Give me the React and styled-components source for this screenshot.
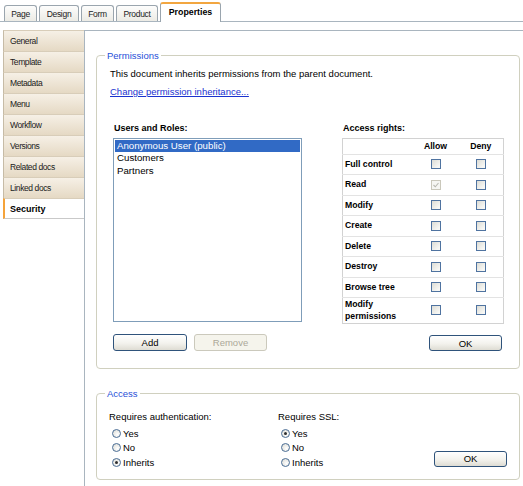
import React from 'react';
import styled, { createGlobalStyle, css } from 'styled-components';

const GlobalStyle = createGlobalStyle`
  html, body { margin: 0; padding: 0; background: #fff; }
  body { font-family: "Liberation Sans", Arial, sans-serif; color: #000; }
  * { box-sizing: border-box; }
`;

const Page = styled.div`
  width: 523px;
  height: 486px;
  overflow: hidden;
  background: #fff;
`;

const TabStrip = styled.div`
  display: flex;
  align-items: flex-end;
  gap: 2px;
  height: 22px;
  padding-left: 4px;
  border-bottom: 1px solid #a9b5bf;
`;

const Tab = styled.div`
  width: ${(p) => p.$w}px;
  height: 16px;
  border: 1px solid #9aa5ae;
  border-bottom: none;
  border-radius: 3px 3px 0 0;
  background: linear-gradient(#fdfdfc, #ecebe5);
  font-size: 8.5px;
  letter-spacing: -0.3px;
  color: #222;
  display: flex;
  align-items: center;
  justify-content: center;
  ${(p) =>
    p.$active &&
    css`
      height: 20px;
      margin-bottom: -1px;
      background: #fff;
      border-top: 2px solid #f2a640;
      font-weight: bold;
      font-size: 8.8px;
      letter-spacing: 0;
      color: #000;
      padding-bottom: 2px;
    `}
`;

const Body = styled.div`
  display: flex;
  margin-top: 8px;
  height: 456px;
`;

const Nav = styled.div`
  width: 82px;
  margin-left: 3px;
  display: flex;
  flex-direction: column;
`;

const NavItem = styled.div`
  height: 21px;
  display: flex;
  align-items: center;
  padding-left: 6px;
  border-left: 1px solid #c6bba6;
  border-top: 1px solid #d8cdb9;
  background: linear-gradient(#f6f0e6, #e5d9c4);
  font-size: 8.5px;
  letter-spacing: -0.4px;
  color: #1a1a1a;
  ${(p) =>
    p.$active &&
    css`
      background: #fff;
      border-left: 2px solid #f5a33a;
      border-bottom: 1px solid #c9c9c9;
      font-weight: bold;
      font-size: 9px;
      letter-spacing: 0;
      color: #000;
      padding-left: 5px;
    `}
`;

const Content = styled.div`
  flex: 1;
  border-top: 1px solid #a9b5bf;
  border-left: 1px solid #a9b5bf;
  padding: 0 3px 0 11px;
  display: flex;
  flex-direction: column;
`;

const Fieldset = styled.fieldset`
  margin: ${(p) => p.$mt}px 0 0 0;
  padding: 0;
  min-width: 0;
  border: 1px solid #d0d0bf;
  border-radius: 4px;
`;

const Legend = styled.legend`
  margin-left: 8px;
  padding: 0 2px;
  color: #1f4fd8;
  font-size: 9.5px;
  line-height: 11px;
`;

const FieldBody = styled.div`
  padding: ${(p) => p.$pad};
`;

const Text = styled.div`
  font-size: 9.5px;
  line-height: 12px;
`;

const Link = styled.a`
  display: block;
  margin-top: 6px;
  font-size: 9.5px;
  line-height: 12px;
  color: #1b33cf;
  text-decoration: underline;
  cursor: pointer;
`;

const Columns = styled.div`
  display: grid;
  grid-template-columns: 189px 161px;
  column-gap: 40px;
  margin: 24px 0 0 3px;
`;

const Column = styled.div`
  display: flex;
  flex-direction: column;
`;

const BoldLabel = styled.div`
  font-size: 9px;
  font-weight: bold;
  line-height: 12px;
  padding-left: 1px;
`;

const ListBox = styled.div`
  margin-top: 3.5px;
  height: 184px;
  border: 1px solid #7f9db9;
  padding: 1px;
  background: #fff;
`;

const ListItem = styled.div`
  height: 12.5px;
  line-height: 12.5px;
  padding-left: 2px;
  font-size: 9.7px;
  white-space: nowrap;
  ${(p) =>
    p.$selected &&
    css`
      background: #316ac5;
      color: #fff;
    `}
`;

const ButtonRow = styled.div`
  display: flex;
  gap: 7px;
  margin-top: ${(p) => p.$mt}px;
  justify-content: ${(p) => p.$justify || 'flex-start'};
  padding-right: ${(p) => p.$pr || 0}px;
`;

const Button = styled.button`
  width: ${(p) => p.$w}px;
  height: ${(p) => p.$h}px;
  padding: 0;
  border: 1px solid #2f537b;
  border-radius: 3px;
  background: linear-gradient(#ffffff, #f3f2ed 55%, #dedcd3);
  font-family: inherit;
  font-size: 9.5px;
  color: #000;
  &:disabled {
    border-color: #cbc9bc;
    background: #f5f4ec;
    color: #aca899;
  }
`;

const RightsTable = styled.table`
  margin-top: 3.5px;
  width: 161px;
  border-collapse: collapse;
  table-layout: fixed;
  border: 1px solid #d2d2d2;
  background: #fff;
`;

const Th = styled.th`
  height: 16px;
  padding: 0;
  font-size: 8.7px;
  font-weight: bold;
  text-align: center;
`;

const Td = styled.td`
  height: ${(p) => p.$h || 20.5}px;
  border-top: 1px solid #e3e3e3;
  padding: 0 0 0 ${(p) => (p.$center ? 0 : 2)}px;
  font-size: 8.7px;
  font-weight: bold;
  line-height: 11.5px;
  text-align: ${(p) => (p.$center ? 'center' : 'left')};
  vertical-align: middle;
`;

const Check = styled.span`
  display: inline-block;
  width: 10px;
  height: 10px;
  vertical-align: middle;
  border: 1px solid #4f73a0;
  background: linear-gradient(135deg, #dcdcd5, #f7f7f4 80%);
  position: relative;
  ${(p) =>
    p.$disabled &&
    css`
      border-color: #cac8bb;
      background: #f6f6f2;
    `}
`;

const CheckMark = styled.svg`
  position: absolute;
  left: 1px;
  top: 1px;
`;

const AccessGrid = styled.div`
  display: grid;
  grid-template-columns: 169px 1fr auto;
  align-items: end;
`;

const RadioGroup = styled.div`
  display: flex;
  flex-direction: column;
`;

const GroupLabel = styled.div`
  font-size: 9.5px;
  line-height: 12px;
  margin-bottom: 3px;
`;

const RadioRow = styled.div`
  display: flex;
  align-items: center;
  gap: 2px;
  height: 14.5px;
  padding-left: 3px;
  font-size: 9.5px;
`;

const RadioCircle = styled.span`
  width: 9px;
  height: 9px;
  border-radius: 50%;
  border: 1px solid #4a6d95;
  background: radial-gradient(circle at 65% 65%, #ffffff, #d9d9d2);
  display: inline-flex;
  align-items: center;
  justify-content: center;
  flex: none;
  &::after {
    content: '';
    width: 3px;
    height: 3px;
    border-radius: 50%;
    background: #2e2e2e;
    display: ${(p) => (p.$checked ? 'block' : 'none')};
  }
`;

const OkWrap = styled.div`
  margin-bottom: 3px;
`;

const tabs = [
  { label: 'Page', w: 33 },
  { label: 'Design', w: 40 },
  { label: 'Form', w: 33 },
  { label: 'Product', w: 42 },
  { label: 'Properties', w: 61, active: true },
];

const navItems = [
  'General',
  'Template',
  'Metadata',
  'Menu',
  'Workflow',
  'Versions',
  'Related docs',
  'Linked docs',
  'Security',
];

const rights = [
  { label: 'Full control' },
  { label: 'Read', allowChecked: true },
  { label: 'Modify' },
  { label: 'Create' },
  { label: 'Delete' },
  { label: 'Destroy' },
  { label: 'Browse tree' },
  { label: 'Modify permissions', h: 26 },
];

function Checkbox({ checked, disabled }) {
  return (
    <Check $disabled={disabled}>
      {checked && (
        <CheckMark width="6" height="6" viewBox="0 0 6 6">
          <path d="M0.5 3 L2.3 4.8 L5.5 1" fill="none" stroke="#b8b8b0" strokeWidth="1.1" />
        </CheckMark>
      )}
    </Check>
  );
}

function Radio({ label, checked }) {
  return (
    <RadioRow>
      <RadioCircle $checked={checked} />
      <span>{label}</span>
    </RadioRow>
  );
}

export default function App() {
  return (
    <Page>
      <GlobalStyle />
      <TabStrip>
        {tabs.map((t) => (
          <Tab key={t.label} $w={t.w} $active={t.active}>
            {t.label}
          </Tab>
        ))}
      </TabStrip>
      <Body>
        <Nav>
          {navItems.map((n) => (
            <NavItem key={n} $active={n === 'Security'}>
              {n}
            </NavItem>
          ))}
        </Nav>
        <Content>
          <Fieldset $mt={19}>
            <Legend>Permissions</Legend>
            <FieldBody $pad="7px 16px 17px 13px">
              <Text>This document inherits permissions from the parent document.</Text>
              <Link>Change permission inheritance...</Link>
              <Columns>
                <Column>
                  <BoldLabel>Users and Roles:</BoldLabel>
                  <ListBox>
                    <ListItem $selected>Anonymous User (public)</ListItem>
                    <ListItem>Customers</ListItem>
                    <ListItem>Partners</ListItem>
                  </ListBox>
                  <ButtonRow $mt={12}>
                    <Button $w={74} $h={17}>Add</Button>
                    <Button $w={73} $h={17} disabled>
                      Remove
                    </Button>
                  </ButtonRow>
                </Column>
                <Column>
                  <BoldLabel>Access rights:</BoldLabel>
                  <RightsTable>
                    <colgroup>
                      <col style={{ width: 70 }} />
                      <col style={{ width: 46 }} />
                      <col style={{ width: 45 }} />
                    </colgroup>
                    <thead>
                      <tr>
                        <Th />
                        <Th>Allow</Th>
                        <Th>Deny</Th>
                      </tr>
                    </thead>
                    <tbody>
                      {rights.map((r) => (
                        <tr key={r.label}>
                          <Td $h={r.h}>{r.label}</Td>
                          <Td $h={r.h} $center>
                            <Checkbox checked={r.allowChecked} disabled={r.allowChecked} />
                          </Td>
                          <Td $h={r.h} $center>
                            <Checkbox />
                          </Td>
                        </tr>
                      ))}
                    </tbody>
                  </RightsTable>
                  <ButtonRow $mt={11} $justify="flex-end" $pr={1}>
                    <Button $w={73} $h={16}>OK</Button>
                  </ButtonRow>
                </Column>
              </Columns>
            </FieldBody>
          </Fieldset>
          <Fieldset $mt={19}>
            <Legend>Access</Legend>
            <FieldBody $pad="12px 12px 9px 12px">
              <AccessGrid>
                <RadioGroup>
                  <GroupLabel>Requires authentication:</GroupLabel>
                  <Radio label="Yes" />
                  <Radio label="No" />
                  <Radio label="Inherits" checked />
                </RadioGroup>
                <RadioGroup>
                  <GroupLabel>Requires SSL:</GroupLabel>
                  <Radio label="Yes" checked />
                  <Radio label="No" />
                  <Radio label="Inherits" />
                </RadioGroup>
                <OkWrap>
                  <Button $w={73} $h={16}>OK</Button>
                </OkWrap>
              </AccessGrid>
            </FieldBody>
          </Fieldset>
        </Content>
      </Body>
    </Page>
  );
}
